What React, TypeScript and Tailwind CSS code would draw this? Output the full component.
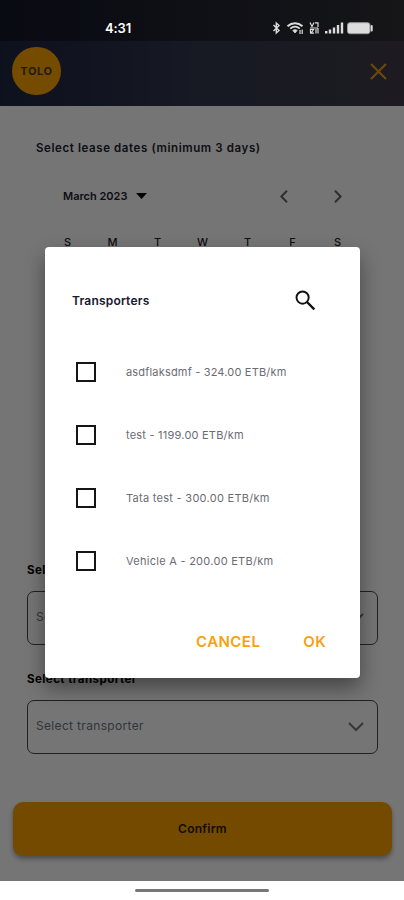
import React, { useState } from 'react';

interface Transporter {
  id: number;
  label: string;
  tracking: string;
}

const transporters: Transporter[] = [
  { id: 1, label: 'asdflaksdmf - 324.00 ETB/km', tracking: 'tracking-[0.18px]' },
  { id: 2, label: 'test - 1199.00 ETB/km', tracking: 'tracking-[0.22px]' },
  { id: 3, label: 'Tata test - 300.00 ETB/km', tracking: 'tracking-[0.28px]' },
  { id: 4, label: 'Vehicle A - 200.00 ETB/km', tracking: 'tracking-[0.27px]' },
];

const weekDays = ['S', 'M', 'T', 'W', 'T', 'F', 'S'];

const StatusIcons: React.FC = () => (
  <svg width="102" height="16" viewBox="0 0 102 16" fill="none" stroke="#dcdcdc">
    <path d="M1.5 5 L7 10.5 L4.3 13 V3 L7 5.5 L1.5 11" strokeWidth="1.4" />
    <path d="M15.5 6.2 C20 2.2 26 2.2 30.5 6.2" strokeWidth="2" />
    <path d="M18.2 8.6 C21.2 6.1 24.8 6.1 27.8 8.6" strokeWidth="1.8" />
    <path d="M20.8 10.4 C22.2 9.4 23.8 9.4 25.2 10.4 L23 13 Z" fill="#dcdcdc" strokeWidth="0.8" />
    <path d="M28 10 V14 M30.2 9.5 V14" strokeWidth="1.2" />
    <path d="M38 2.5 L40 6.5 L42 2.5 M43 2.8 H46 V7 M38 8 H46 M38.5 13.2 V9.5 H41.5 L39 13.2 H42 M44 9 V13.5 M46 8 V13.5" strokeWidth="1.2" />
    <path d="M54.2 13.5 V11 M58 13.5 V9.5 M62 13.5 V7.5 M66 13.5 V5 M70 13.5 V2.5" strokeWidth="2.4" />
    <rect x="75.5" y="2.7" width="22.5" height="11" rx="2.4" fill="#dcdcdc" stroke="#999" />
    <path d="M99.7 6 V10.4" strokeWidth="2" strokeLinecap="round" />
  </svg>
);

const SelectBox: React.FC<{ label: string; placeholder: string }> = ({ label, placeholder }) => (
  <div>
    <div className="h-4 text-[11.5px] leading-4 font-bold tracking-[0.45px] text-black">{label}</div>
    <div className="mt-[13px] flex h-[54px] items-center justify-between rounded-[7px] border-[1.5px] border-[#484848] pr-[13px] pl-2">
      <span className="pb-[2px] text-[12px] tracking-[0.33px] text-[#70757d]">{placeholder}</span>
      <svg width="16" height="10" viewBox="0 0 16 10" fill="none" stroke="#777" strokeWidth="2">
        <path d="M1 1 L8 8 L15 1" />
      </svg>
    </div>
  </div>
);

const TransporterDialog: React.FC = () => {
  const [selected, setSelected] = useState<number[]>([]);

  const toggle = (id: number) => {
    setSelected(prev => (prev.includes(id) ? prev.filter(item => item !== id) : [...prev, id]));
  };

  return (
    <div className="flex h-[431px] w-[315px] flex-col rounded-[4px] bg-white shadow-[0_10px_20px_rgba(0,0,0,0.4)]">
      <div className="mt-[41px] flex h-6 items-center justify-between pr-[44px] pl-[27px]">
        <h2 className="pt-[2px] text-[12px] font-semibold tracking-[0.2px] text-[#17182f]">Transporters</h2>
        <svg width="21" height="21" viewBox="0 0 21 21" fill="none" stroke="#111">
          <circle cx="7.6" cy="7.6" r="6.1" strokeWidth="1.9" />
          <path d="M12 12 L19.3 19.3" strokeWidth="2.4" />
        </svg>
      </div>
      <div className="mt-[29px] flex flex-col">
        {transporters.map(item => (
          <div key={item.id} className="flex h-[63px] items-center pl-[31px]">
            <button
              onClick={() => toggle(item.id)}
              className={`mb-px h-5 w-5 border-2 border-[#151515] ${selected.includes(item.id) ? 'bg-[#f9a11b]' : 'bg-white'}`}
            />
            <span className={`ml-[30px] text-[11px] text-[#6b6b73] ${item.tracking}`}>{item.label}</span>
          </div>
        ))}
      </div>
      <div className="mt-[37px] flex h-6 items-center justify-end gap-[43px] pr-[34px] text-[15px] font-semibold text-[#f99f10]">
        <button className="tracking-[0.45px]">CANCEL</button>
        <button className="tracking-[0.3px]">OK</button>
      </div>
    </div>
  );
};

const App: React.FC = () => {
  return (
    <div className="relative flex h-[900px] w-[404px] flex-col overflow-hidden bg-white font-['Inter','Liberation_Sans',sans-serif]">
      <div className="h-[41px] bg-linear-to-r from-[#141829] to-[#303036]" />
      <header className="flex h-[65px] items-center justify-between bg-linear-to-r from-[#1e2542] via-[#33384d] to-[#403c48] pr-[17px] pb-[5px] pl-3">
        <div className="flex h-[48px] w-[49px] items-center justify-center rounded-full bg-[#ffa400] text-[11px] font-bold tracking-[0.6px] text-[#48402f]">
          TOLO
        </div>
        <svg width="17" height="17" viewBox="0 0 17 17" stroke="#eba013" strokeWidth="2.1">
          <path d="M1 1 L16 16 M16 1 L1 16" />
        </svg>
      </header>

      <main className="flex h-[775px] flex-col">
        <h1 className="mt-[34px] ml-[36px] text-[11.5px] leading-4 font-semibold tracking-[0.6px] text-[#20232f]">
          Select lease dates (minimum 3 days)
        </h1>
        <div className="mt-8 flex h-4 items-center pr-[62px] pl-[63px]">
          <span className="text-[11px] font-semibold text-[#20232f]">March 2023</span>
          <svg className="ml-[9px]" width="11" height="6" viewBox="0 0 11 6">
            <path d="M0 0 H11 L5.5 6 Z" fill="#050505" />
          </svg>
          <div className="ml-auto flex gap-[46px]">
            <svg width="8" height="13" viewBox="0 0 8 13" fill="none" stroke="#646464" strokeWidth="2">
              <path d="M7 0.7 L1.3 6.5 L7 12.3" />
            </svg>
            <svg width="8" height="13" viewBox="0 0 8 13" fill="none" stroke="#646464" strokeWidth="2">
              <path d="M1 0.7 L6.7 6.5 L1 12.3" />
            </svg>
          </div>
        </div>
        <div className="mt-[30px] ml-[45px] flex h-4">
          {weekDays.map((day, idx) => (
            <span key={idx} className="w-[45px] text-center text-[11px] leading-4 font-medium text-[#20232f]">{day}</span>
          ))}
        </div>
        <div className="mt-[312px] mr-[26px] ml-[27px] flex flex-col gap-[26px]">
          <SelectBox label="Select vehicle type" placeholder="Select vehicle type" />
          <SelectBox label="Select transporter" placeholder="Select transporter" />
        </div>
        <button className="mr-3 ml-[13px] mt-[48px] flex h-[54px] shrink-0 items-center justify-center rounded-[10px] bg-[#fca000] text-[12px] font-semibold tracking-[0.25px] text-[#2a2010] shadow-[0_3px_5px_rgba(0,0,0,0.35)]">
          Confirm
        </button>
      </main>

      <div className="flex h-[19px] justify-center bg-white pt-2">
        <div className="h-[3px] w-[134px] rounded-full bg-[#777]" />
      </div>

      {/* backdrop stops above the system navigation bar */}
      <div className="absolute inset-x-0 top-0 h-[881px] bg-black/54">
        <div className="flex h-[41px] items-center pl-[105px] pr-[30px] pt-[14px]">
          <span className="text-[13px] leading-4 font-semibold tracking-[-0.1px] text-white">4:31</span>
          <div className="ml-auto">
            <StatusIcons />
          </div>
        </div>
        <div className="mt-[206px] ml-[45px]">
          <TransporterDialog />
        </div>
      </div>
    </div>
  );
};

export default App;
